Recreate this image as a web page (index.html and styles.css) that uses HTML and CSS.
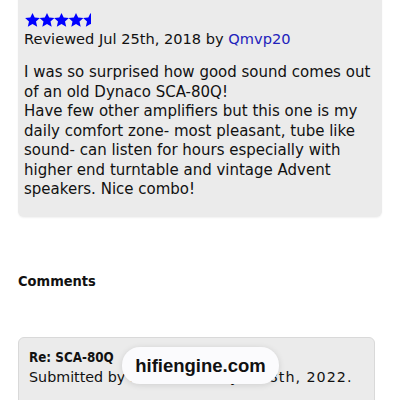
FILE: index.html
```html
<!DOCTYPE html>
<html lang="en">
<head>
  <meta charset="UTF-8" />
  <meta name="viewport" content="width=device-width, initial-scale=1" />
  <title>Dynaco SCA-80Q reviews</title>
  <link rel="stylesheet" href="styles.css">
</head>
<body>

  <div class="review">
    <div class="stars" title="4.5 / 5">
      <svg width="72" height="14" viewBox="0 0 72 14">
        <defs>
          <path id="star" d="M7.5 0 L9.7 4.6 L14.9 5.1 L11 8.5 L12.2 13.8 L7.5 11 L2.8 13.8 L4 8.5 L0.1 5.1 L5.3 4.6 Z" />
          <clipPath id="half"><rect x="0" y="0" width="8" height="14" /></clipPath>
        </defs>
        <use href="#star" x="0" fill="#0000ff" />
        <use href="#star" x="14.5" fill="#0000ff" />
        <use href="#star" x="29" fill="#0000ff" />
        <use href="#star" x="43.5" fill="#0000ff" />
        <use href="#star" x="58" fill="#0000ff" clip-path="url(#half)" />
      </svg>
    </div>
    <p class="meta">Reviewed Jul 25th, 2018 by <a href="#">Qmvp20</a></p>
    <p class="body">I was so surprised how good sound comes out of an old Dynaco SCA-80Q!<br>Have few other amplifiers but this one is my daily comfort zone- most pleasant, tube like sound- can listen for hours especially with higher end turntable and vintage Advent speakers. Nice combo!</p>
  </div>

  <h3 class="comments-title">Comments</h3>

  <div class="comment">
    <p class="comment-subject">Re: SCA-80Q</p>
    <p class="comment-meta">Submitted by Ken Wilker on Jan <span class="date">28th, 2022.</span></p>
    <div class="site-pill">hifiengine.com</div>
  </div>

</body>
</html>
```

FILE: styles.css
```css
* { margin:0; padding:0; box-sizing:border-box; }
body { font-family:"DejaVu Sans", Verdana, sans-serif; color:#111; background:#fff; padding:0 18px; overflow:hidden; height:400px; }
a { color:#2222bb; text-decoration:none; }

.review { background:#ebebeb; border-radius:6px; margin:-10px 0 0; padding:23px 6px 17px; box-shadow:0 1px 2px rgba(0,0,0,0.06); }
.stars { height:14px; line-height:0; margin-left:1px; }
.meta { font-size:14.6px; line-height:20px; margin-top:2px; }
.body { font-size:15px; line-height:19.5px; margin-top:14px; }

.comments-title { font-family:"DejaVu Sans Condensed", "DejaVu Sans", sans-serif; font-size:14.5px; font-weight:700; margin:56px 0 48px; }

.comment { position:relative; background:#ebebeb; border:1px solid #d9d9d9; border-radius:6px; margin-right:7px; padding:11px 10px 40px; }
.comment-subject { font-family:"DejaVu Sans Condensed", "DejaVu Sans", sans-serif; font-size:13.3px; font-weight:700; line-height:18px; }
.comment-meta { font-size:14.3px; line-height:20px; white-space:nowrap; }
.comment-meta .date { letter-spacing:1px; }

.site-pill { position:absolute; left:103px; top:9px; width:157px; height:37px; border-radius:18px; background:#fbfbfd; box-shadow:0 1px 6px rgba(0,0,0,0.12); font-family:"Liberation Sans", Arial, sans-serif; font-weight:700; font-size:18.5px; line-height:37px; text-align:center; color:#111; }
```
